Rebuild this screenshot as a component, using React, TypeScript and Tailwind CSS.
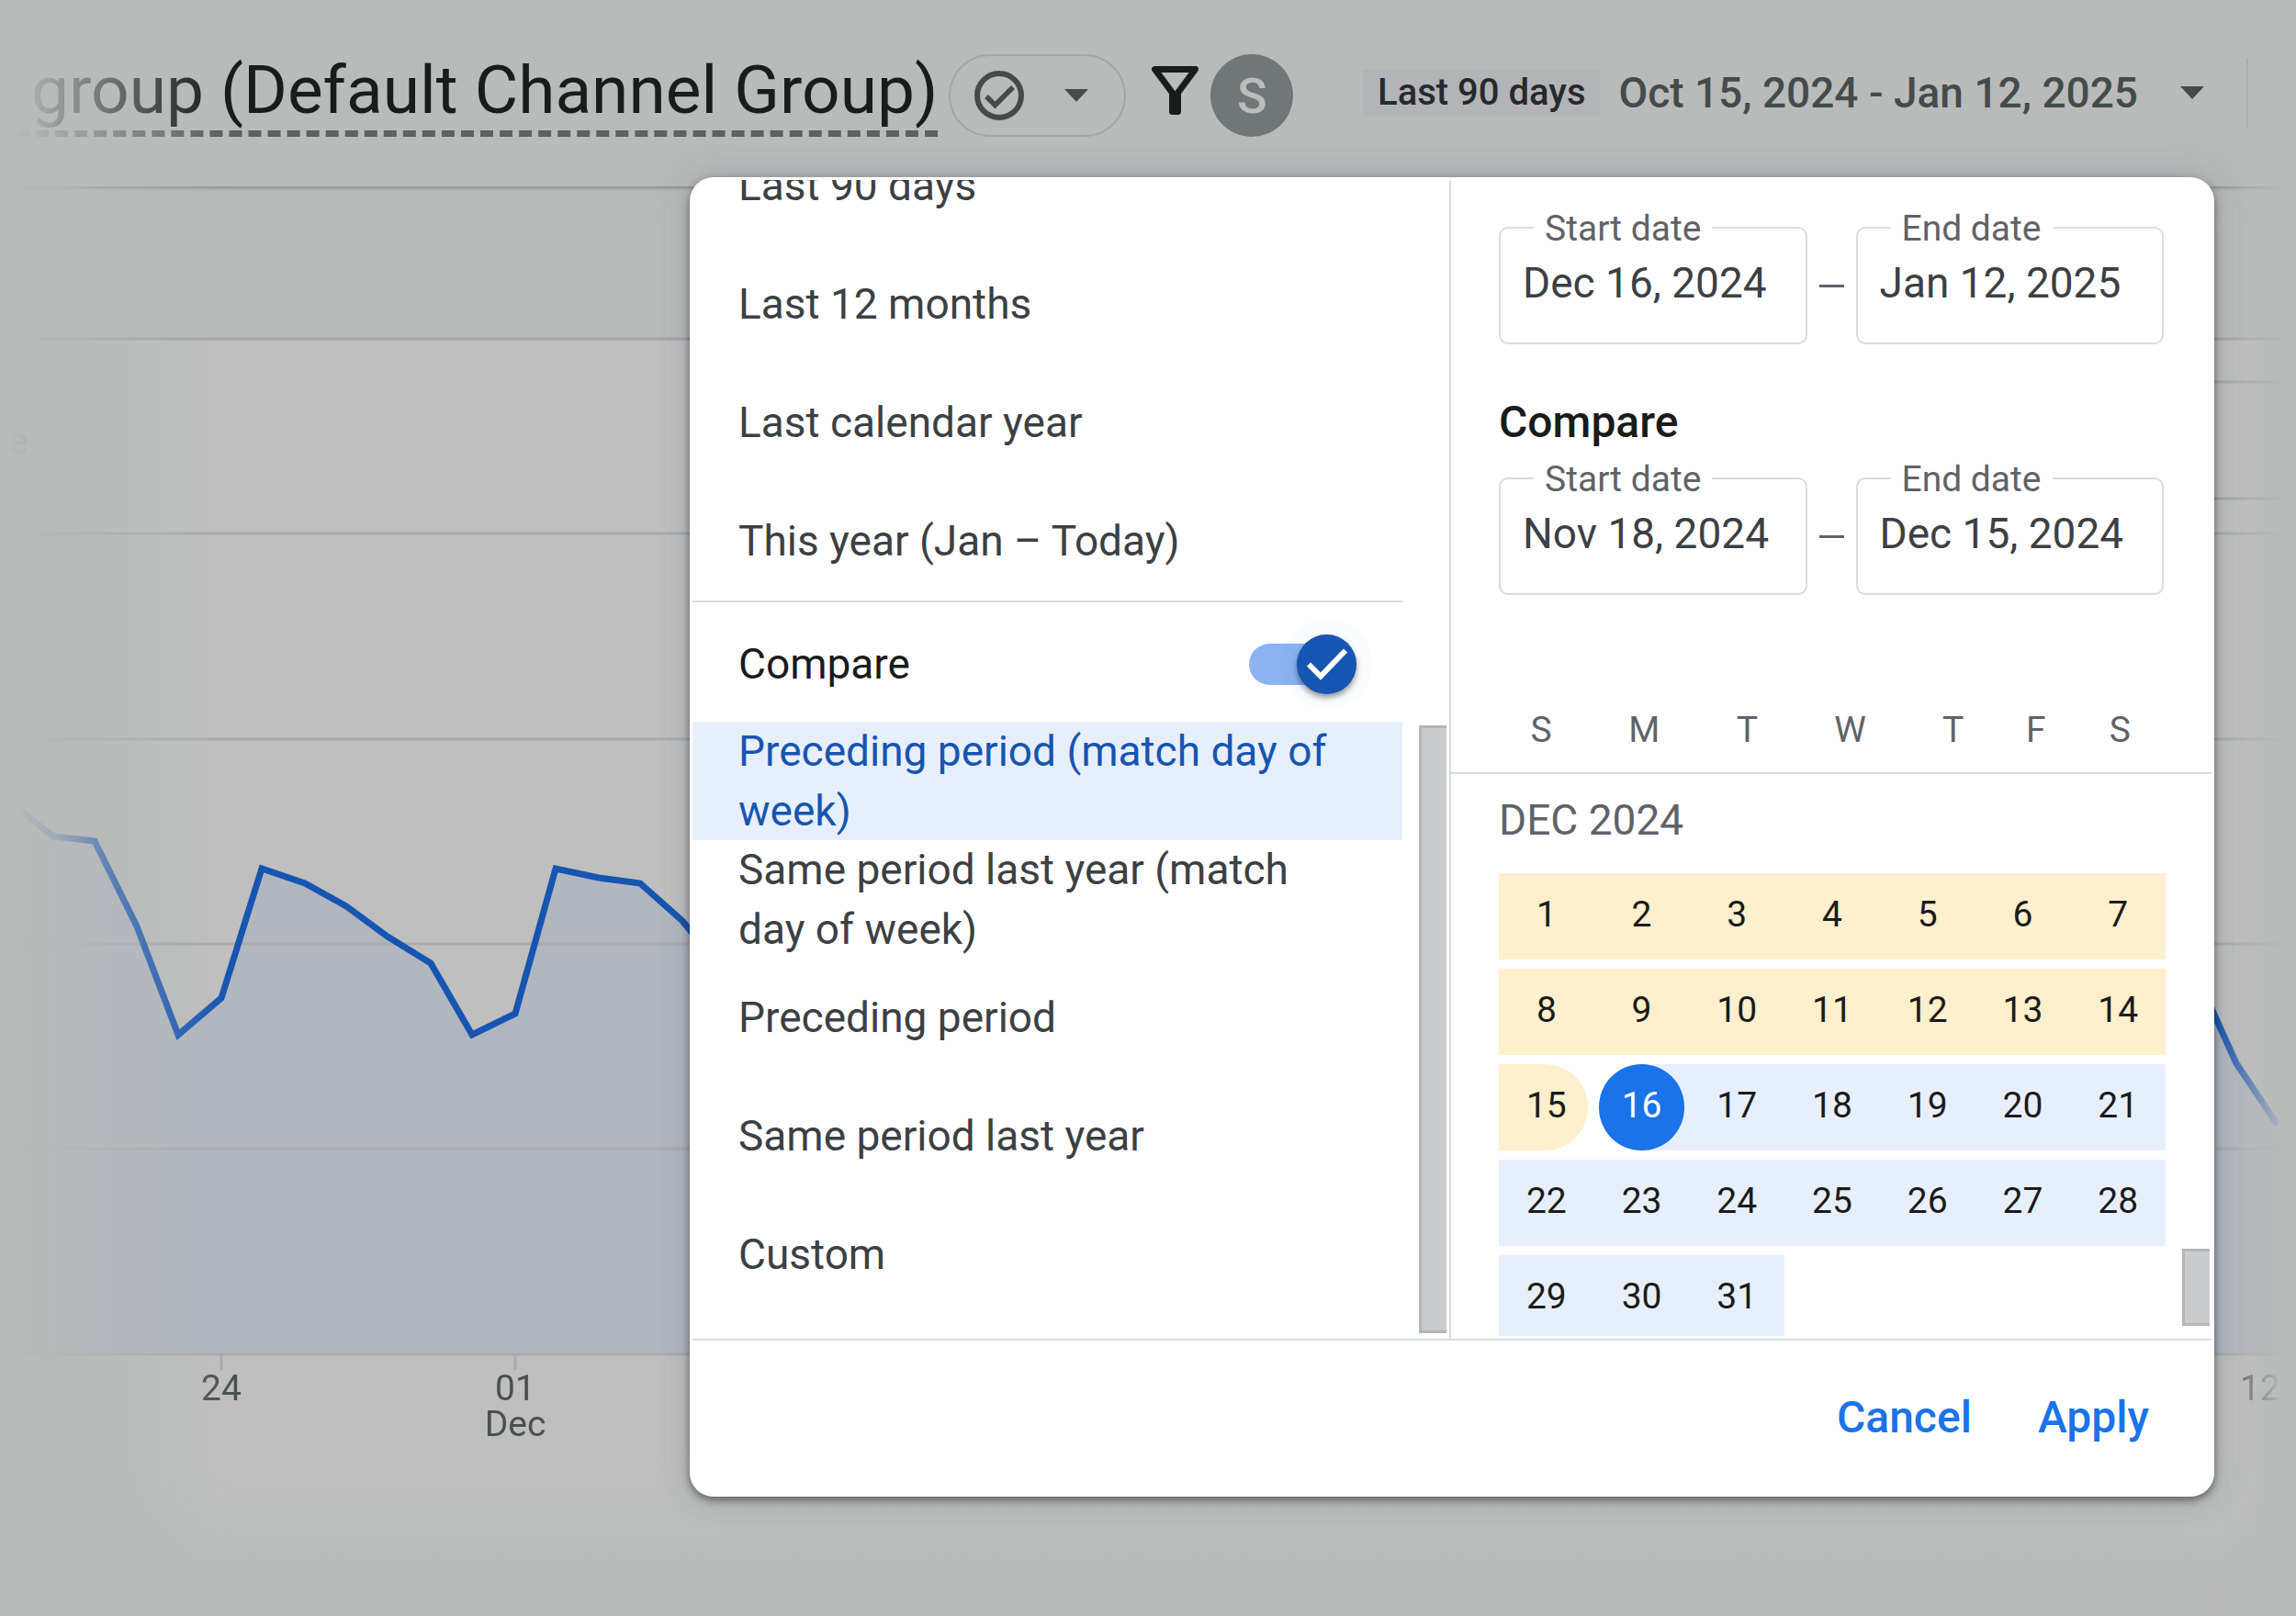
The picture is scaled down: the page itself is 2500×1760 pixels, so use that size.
import React, { useId, useState } from "react";
import clsx from "clsx";

const presets = ["Last 90 days", "Last 12 months", "Last calendar year", "This year (Jan – Today)"];

const comparisons = [
  "Preceding period (match day of week)",
  "Same period last year (match day of week)",
  "Preceding period",
  "Same period last year",
  "Custom",
];

const weekdays = ["S", "M", "T", "W", "T", "F", "S"];

const trafficLeft =
  "22,883 58,911 103,916 149,1009 194,1127 241,1087 285,946 332,962 377,987 422,1020 469,1049 514,1127 561,1104 605,946 652,956 697,962 743,1003 790,1060";
const trafficRight = "2390,1056 2411,1105 2435,1158 2480,1225";

function Caret() {
  return (
    <svg viewBox="0 0 26 14" className="h-[14px] w-[26px]" aria-hidden="true">
      <path d="M0 0h26L13 14z" fill="#444b4b" />
    </svg>
  );
}

function Header() {
  return (
    <header className="flex h-[203px] items-start pt-[59px] pl-[18px]">
      <h1 className="h-[90px] shrink-0 border-b-[7px] border-dashed border-[#5d6163] pl-4 text-[73px] leading-[78px] whitespace-nowrap text-[#1a1b1b] [mask-image:linear-gradient(to_right,transparent,#000_220px)]">
        group (Default Channel Group)
      </h1>
      <button
        type="button"
        aria-label="Data quality"
        className="ml-3 flex h-[90px] w-[193px] shrink-0 items-center gap-11 rounded-full border-2 border-[#a3a5a9] pl-[26px]"
      >
        <svg viewBox="0 0 54 54" className="size-[54px]" fill="none" stroke="#444b4b" aria-hidden="true">
          <circle cx="27" cy="27" r="24" strokeWidth="6" />
          <path d="M13 28l9.500 9.500L42 18" strokeWidth="5.500" />
        </svg>
        <Caret />
      </button>
      <button type="button" aria-label="Add filter" className="mt-[13px] ml-7 shrink-0">
        <svg viewBox="0 0 51 53" className="h-[53px] w-[51px]" aria-hidden="true">
          <path d="M3.500 3.500h44L28.500 29v20.500h-6V29z" fill="none" stroke="#1a1b1b" strokeWidth="7" strokeLinejoin="round" />
          <path d="M20 28h11v22H20z" fill="#1a1b1b" />
        </svg>
      </button>
      <span className="ml-[13px] flex size-[90px] shrink-0 items-center justify-center rounded-full bg-[#717679] text-[54px] font-medium text-[#bbbcbc]">
        S
      </span>
      <div className="ml-auto flex h-[84px] shrink-0 items-center">
        <button type="button" className="flex items-center">
          <span className="h-[51px] bg-[#b3b4b7] px-4 text-[40px] leading-[50px] font-medium text-[#27292b]">
            Last 90 days
          </span>
          <span className="mr-[46px] ml-5 text-[46px] leading-[60px] font-medium text-[#444b4b]">
            Oct 15, 2024 - Jan 12, 2025
          </span>
          <Caret />
        </button>
        <span className="mr-[52px] ml-[46px] h-[76px] w-[2px] bg-[#acadaf]" />
      </div>
    </header>
  );
}

function TrafficChart() {
  return (
    <svg
      viewBox="0 203 2500 1557"
      className="block h-auto w-full [mask-image:linear-gradient(to_right,transparent_0.300%,rgba(0,0,0,0.150)_2.400%,rgba(0,0,0,0.600)_5%,#000_10%,#000_96.500%,transparent_99.500%)]"
      role="img"
      aria-label="Traffic by day"
    >
      <defs>
        <linearGradient id="cardSide" gradientUnits="userSpaceOnUse" x1="80" y1="0" x2="240" y2="0">
          <stop offset="0" stopColor="#bfbfbf" stopOpacity="0" />
          <stop offset="1" stopColor="#bfbfbf" />
        </linearGradient>
        <linearGradient id="cardFoot" x1="0" y1="0" x2="0" y2="1">
          <stop offset="0" stopColor="#b9bbba" stopOpacity="0" />
          <stop offset="1" stopColor="#b9bbba" />
        </linearGradient>
        <linearGradient id="barShade" x1="0" y1="0" x2="0" y2="1">
          <stop offset="0" stopColor="#8b8d8d" />
          <stop offset="0.400" stopColor="#9a9c9c" />
          <stop offset="1" stopColor="#b9bbba" />
        </linearGradient>
      </defs>
      <rect x="0" y="202" width="2500" height="6" fill="url(#barShade)" />
      <rect x="0" y="370" width="2500" height="1390" fill="url(#cardSide)" />
      <rect x="0" y="1600" width="2500" height="120" fill="url(#cardFoot)" />
      <rect x="0" y="1720" width="2500" height="40" fill="#b9bbba" />
      <path d="M0 369H2500M2390 416H2500M2390 543H2500" stroke="#a2a3a7" strokeWidth="3" />
      <polygon points={`${trafficLeft} 790,1475 22,1475`} fill="#b1b6bf" />
      <polygon points={`${trafficRight} 2480,1475 2390,1475`} fill="#b1b6bf" />
      <path
        d="M0 581H2500M0 805H2500M0 1028H2500M0 1251H2500M0 1475H2500M241 1475V1492M561 1475V1492"
        stroke="#a9abac"
        strokeWidth="3"
      />
      <polyline points={trafficLeft} fill="none" stroke="#1655b1" strokeWidth="7" />
      <polyline points={trafficRight} fill="none" stroke="#1655b1" strokeWidth="7" />
      <g fill="#4a5051" fontSize="39" textAnchor="middle">
        <text x="20" y="494">e</text>
        <text x="241" y="1525">24</text>
        <text x="561" y="1525">01</text>
        <text x="561" y="1564">Dec</text>
        <text x="2461" y="1525">12</text>
      </g>
    </svg>
  );
}

function DateField({ label, value }: { label: string; value: string }) {
  const id = useId();
  return (
    <div className="relative h-32 min-w-0 flex-1 rounded-[10px] border-2 border-[#dadce0]">
      <label
        htmlFor={id}
        className="absolute -top-[22px] left-9 bg-white px-3 text-[39px] leading-[44px] whitespace-nowrap text-[#5f6368]"
      >
        {label}
      </label>
      <input
        id={id}
        defaultValue={value}
        className="mt-[29px] block h-[60px] w-full bg-transparent pl-6 text-[46px] leading-[60px] text-[#3c4043] outline-none"
      />
    </div>
  );
}

function DateRange({ start, end }: { start: string; end: string }) {
  return (
    <div className="flex items-center">
      <DateField label="Start date" value={start} />
      <span className="mx-[13px] h-[3px] w-[27px] bg-[#5f6368]" />
      <DateField label="End date" value={end} />
    </div>
  );
}

function CompareSwitch() {
  const [on, setOn] = useState(true);
  return (
    <label className="flex h-[130px] items-center justify-between pr-[50px] pl-[50px] text-[46px] text-[#1a1b1b]">
      <span className="pt-1">Compare</span>
      <span className="relative mt-1 flex h-[45px] w-[117px] items-center justify-end rounded-full bg-[#8cb2f2]">
        <input
          type="checkbox"
          role="switch"
          checked={on}
          onChange={() => setOn(!on)}
          className="absolute inset-0 z-10 m-0 cursor-pointer appearance-none opacity-0"
        />
        <span className="flex size-[65px] shrink-0 items-center justify-center rounded-full bg-[#1655b1] shadow-[0_0_0_17px_rgba(26,115,232,0.025),0_4px_6px_rgba(0,0,0,0.400)]">
          <svg viewBox="0 0 46 36" className="h-9 w-[46px]" fill="none" aria-hidden="true">
            <path d="M3 18.500L16 31.500L43 3.500" stroke="#fff" strokeWidth="6" />
          </svg>
        </span>
      </span>
    </label>
  );
}

function PeriodList() {
  const [selected, setSelected] = useState(0);
  return (
    <div className="flex min-h-0 min-w-0 flex-col border-r-2 border-[#dadce0]">
      <div className="mr-[51px] flex h-[460px] shrink-0 flex-col justify-end overflow-hidden border-b-2 border-[#dadce0]">
        {presets.map((name) => (
          <button
            key={name}
            type="button"
            className="flex h-[129px] shrink-0 items-center pl-[50px] text-left text-[46px] text-[#3c4043]"
          >
            {name}
          </button>
        ))}
      </div>
      <div className="mr-[51px]">
        <CompareSwitch />
      </div>
      <div className="flex min-h-0 flex-1">
        <div role="listbox" aria-label="Comparison" className="mr-[18px] flex min-w-0 flex-1 flex-col">
          {comparisons.map((name, i) => (
            <button
              key={name}
              type="button"
              role="option"
              aria-selected={i === selected}
              onClick={() => setSelected(i)}
              className={clsx(
                "flex h-[129px] shrink-0 items-center pr-12 pl-[50px] text-left text-[46px] leading-[65px]",
                i === selected ? "bg-[#e8effc] text-[#1655b1]" : "text-[#3c4043]",
              )}
            >
              {name}
            </button>
          ))}
        </div>
        <div className="mt-1 mr-[3px] mb-[6px] w-[30px] border-y-[3px] border-l-[3px] border-[#b3b5b6] bg-[#c9cbcc]" />
      </div>
    </div>
  );
}

function Day({ day }: { day: number }) {
  return (
    <button
      type="button"
      className={clsx(
        "relative h-[94px] text-[39px] text-[#1a1b1b]",
        day < 15 && "bg-[#feefcd]",
        day > 16 && "bg-[#e8effc]",
      )}
    >
      {day === 15 && <span className="absolute inset-y-0 right-[7px] left-0 rounded-r-full bg-[#feefcd]" />}
      {day === 16 && (
        <>
          <span className="absolute inset-y-0 right-0 left-1/2 bg-[#e8effc]" />
          <span className="absolute inset-x-[5px] inset-y-0 rounded-full bg-[#1a73e8]" />
        </>
      )}
      <span className={clsx("relative block pb-1", day === 16 && "text-white")}>{day}</span>
    </button>
  );
}

function CalendarPane() {
  return (
    <div className="relative flex min-h-0 min-w-0 flex-col">
      <div className="pt-[51px] pr-[52px] pl-[52px]">
        <DateRange start="Dec 16, 2024" end="Jan 12, 2025" />
        <h2 className="mt-[55px] mb-[30px] text-[48px] leading-[60px] font-medium text-[#1a1b1b]">Compare</h2>
        <DateRange start="Nov 18, 2024" end="Dec 15, 2024" />
      </div>
      <div className="mt-[117px] grid grid-cols-[112fr_112fr_112fr_112fr_112fr_68fr_115fr] border-b-2 border-[#dadce0] pr-[42px] pb-4 pl-[42px] text-center text-[39px] leading-[60px] text-[#5f6368]">
        {weekdays.map((d, i) => (
          <span key={i}>{d}</span>
        ))}
      </div>
      <h3 className="h-[108px] shrink-0 pl-[52px] text-[46px] leading-[101px] text-[#5f6368]">DEC 2024</h3>
      <div className="mb-[3px] min-h-0 flex-1 overflow-hidden pr-[50px] pl-[52px]">
        <div className="grid grid-cols-7 gap-y-[10px]">
          {Array.from({ length: 31 }, (_, i) => (
            <Day key={i} day={i + 1} />
          ))}
        </div>
      </div>
      <div className="absolute right-[2px] bottom-[14px] h-[84px] w-[30px] border-y-[3px] border-l-[3px] border-[#b3b5b6] bg-[#c9cbcc]" />
    </div>
  );
}

function DateRangeDialog() {
  return (
    <section
      role="dialog"
      aria-label="Select date range"
      className="absolute top-[193px] right-[89px] left-[751px] overflow-hidden rounded-[26px] bg-white p-[3px] shadow-[0_0_36px_rgba(60,64,80,0.220),0_4px_10px_rgba(0,0,0,0.450)]"
    >
      <div className="grid h-[1262px] grid-cols-[826fr_828fr] grid-rows-[minmax(0,1fr)]">
        <PeriodList />
        <CalendarPane />
      </div>
      <footer className="flex h-[169px] items-center justify-end gap-[72px] border-t-2 border-[#dadce0] pr-[68px] text-[48px] font-medium text-[#1a73e8]">
        <button type="button">Cancel</button>
        <button type="button">Apply</button>
      </footer>
    </section>
  );
}

export default function App() {
  return (
    <main className="relative min-h-screen overflow-hidden bg-[#b9bbba] font-[Roboto,sans-serif]">
      <Header />
      <TrafficChart />
      <DateRangeDialog />
    </main>
  );
}
